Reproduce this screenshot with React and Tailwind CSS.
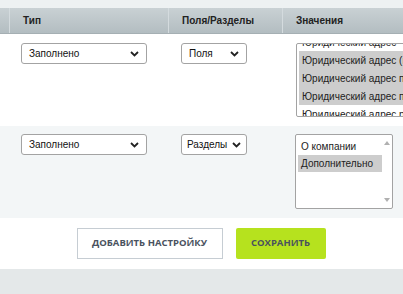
import React from "react";

function Chevron() {
  return (
    <svg width="9" height="6" viewBox="0 0 9 6" className="shrink-0">
      <path d="M1 1l3.5 3.5L8 1" fill="none" stroke="#222" strokeWidth="1.8" />
    </svg>
  );
}

// Fake native select
function Select({ label, width, pad = "pl-[7px] pr-[7px]" }) {
  return (
    <div
      className={`${width} ${pad} h-[21px] bg-white border border-[#a3a3a3] rounded-[3px] flex items-center justify-between gap-[3px] text-[10px] text-[#111]`}
    >
      <span>{label}</span>
      <Chevron />
    </div>
  );
}

function Option({ text, selected, h }) {
  return (
    <div
      className={`${h} pl-[3px] flex items-center whitespace-nowrap ${
        selected ? "bg-[#cdcdcd]" : ""
      }`}
    >
      {text}
    </div>
  );
}

export default function App() {
  return (
    <div className="w-[403px] h-[294px] overflow-hidden bg-[#e4e8e9] font-['Liberation_Sans',Arial,sans-serif] text-[#222]">
      {/* top strip */}
      <div className="h-2 bg-[#edf1f2]" />

      {/* table header */}
      <div className="grid grid-cols-[9px_159px_114px_1fr] h-[26px] bg-gradient-to-b from-[#c9d1d4] to-[#b3bdc1] border-b border-[#a5afb3] text-[10px] font-bold text-[#222]">
        <div />
        <div className="border-l border-[#d4dbde] pl-[13px] flex items-center">Тип</div>
        <div className="border-l border-[#d4dbde] pl-[13px] flex items-center">Поля/Разделы</div>
        <div className="border-l border-[#d4dbde] pl-[13px] flex items-center">Значения</div>
      </div>

      {/* row 1 */}
      <div className="grid grid-cols-[9px_159px_114px_1fr] h-[92px] bg-white pt-[9px] items-start">
        <div />
        <div className="pl-[12px]">
          <Select label="Заполнено" width="w-[126px]" />
        </div>
        <div className="pl-[13px]">
          <Select label="Поля" width="w-[66px]" />
        </div>
        <div className="pl-[14px] overflow-hidden">
          <div className="w-[130px] h-[74px] border border-[#a3a3a3] rounded-[2px] bg-white overflow-hidden px-[2px] text-[10px] text-[#222]">
            <div className="-mt-[11px]">
              <Option h="h-[18px]" text="Юридический адрес" />
              <Option h="h-[18px]" text="Юридический адрес (индекс)" selected />
              <Option h="h-[18px]" text="Юридический адрес почтовый" selected />
              <Option h="h-[18px]" text="Юридический адрес полный" selected />
              <Option h="h-[18px]" text="Юридический адрес район" />
            </div>
          </div>
        </div>
      </div>

      {/* row 2 */}
      <div className="grid grid-cols-[9px_159px_114px_1fr] h-[92px] bg-[#f3f6f7] pt-[8px] items-start">
        <div />
        <div className="pl-[12px]">
          <Select label="Заполнено" width="w-[126px]" />
        </div>
        <div className="pl-[13px]">
          <Select label="Разделы" width="w-[66px]" pad="pl-[5px] pr-[5px]" />
        </div>
        <div className="pl-[13px]">
          <div className="w-[98px] h-[75px] border border-[#a3a3a3] rounded-[2px] bg-white flex text-[10px] text-[#222]">
            <div className="flex-1 pt-[3px] pl-[2px]">
              <Option h="h-[17px]" text="О компании" />
              <Option h="h-[17px]" text="Дополнительно" selected />
            </div>
            <div className="w-[10px] flex flex-col justify-between items-center py-[6px]">
              <svg width="6" height="4" viewBox="0 0 6 4"><path d="M0 4L3 0l3 4z" fill="#b0b0b0" /></svg>
              <svg width="6" height="4" viewBox="0 0 6 4"><path d="M0 0h6L3 4z" fill="#b0b0b0" /></svg>
            </div>
          </div>
        </div>
      </div>

      {/* footer buttons */}
      <div className="h-[51px] bg-white flex items-center justify-center gap-[13px] pr-[1px] font-['Open_Sans',sans-serif] text-[9.5px] font-bold text-[#4a525e]">
        <button className="w-[146px] h-[31px] bg-white border border-[#c6cdd3] flex items-center justify-center">
          ДОБАВИТЬ НАСТРОЙКУ
        </button>
        <button className="w-[90px] h-[31px] bg-[#b6e21e] rounded-[2px] flex items-center justify-center">
          СОХРАНИТЬ
        </button>
      </div>
    </div>
  );
}
